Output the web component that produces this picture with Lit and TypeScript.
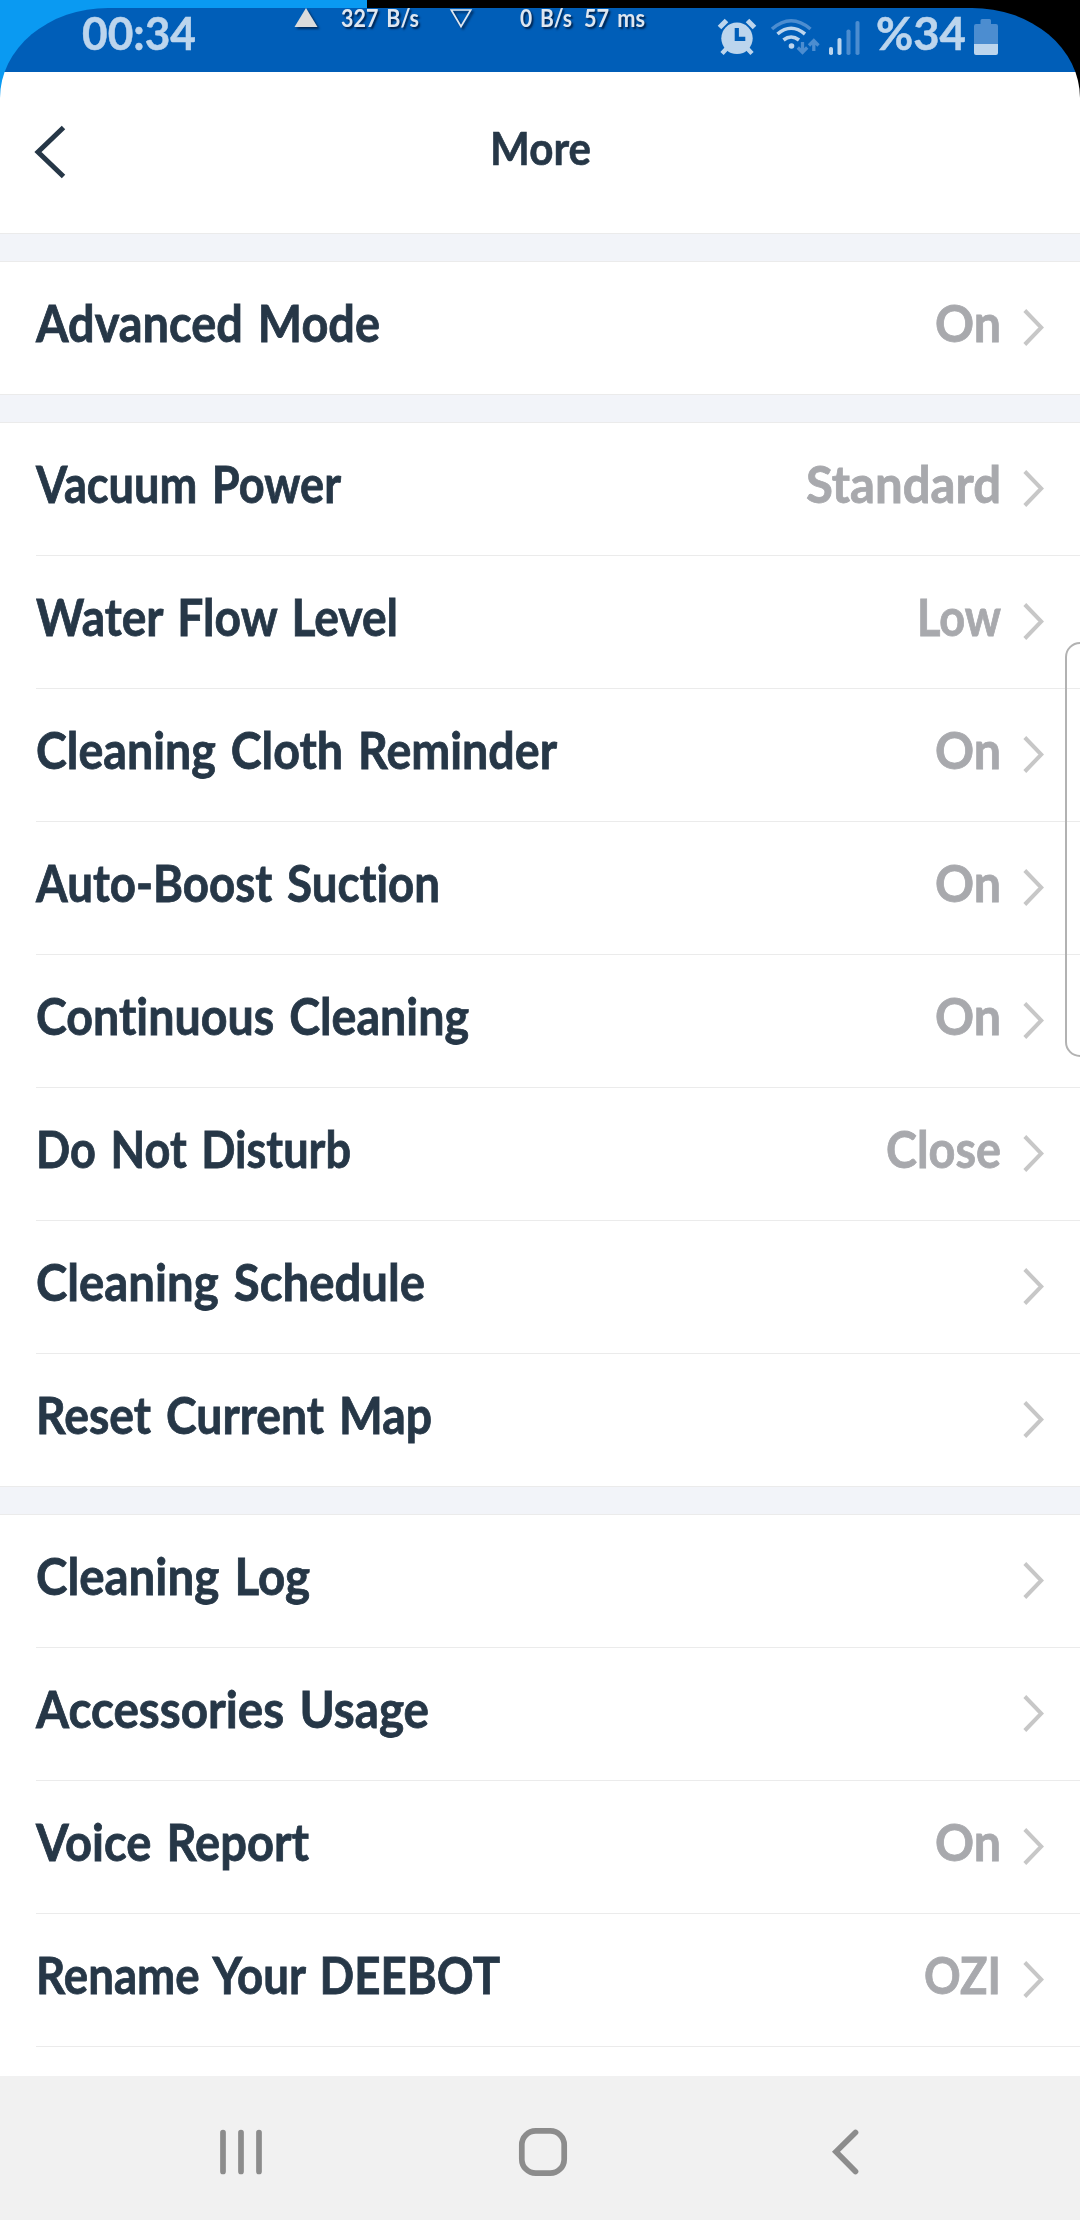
import { LitElement, html, css, nothing } from "lit";
import { customElement, property } from "lit/decorators.js";

interface Row {
  label: string;
  width: number;
  value?: string;
  valueWidth?: number;
}

const GROUPS: Row[][] = [
  [{ label: "Advanced Mode", width: 344, value: "On", valueWidth: 66 }],
  [
    { label: "Vacuum Power", width: 305, value: "Standard", valueWidth: 195 },
    { label: "Water Flow Level", width: 362, value: "Low", valueWidth: 84 },
    { label: "Cleaning Cloth Reminder", width: 521, value: "On", valueWidth: 66 },
    { label: "Auto-Boost Suction", width: 404, value: "On", valueWidth: 66 },
    { label: "Continuous Cleaning", width: 433, value: "On", valueWidth: 66 },
    { label: "Do Not Disturb", width: 315, value: "Close", valueWidth: 115 },
    { label: "Cleaning Schedule", width: 389 },
    { label: "Reset Current Map", width: 396 },
  ],
  [
    { label: "Cleaning Log", width: 274 },
    { label: "Accessories Usage", width: 393 },
    { label: "Voice Report", width: 273, value: "On", valueWidth: 66 },
    { label: "Rename Your DEEBOT", width: 464, value: "OZI", valueWidth: 77 },
  ],
];

/** One line of text, condensed or widened so that it fills a given width. */
@customElement("fit-text")
export class FitText extends LitElement {
  @property() text = "";
  @property({ type: Number }) width = 0;

  static styles = css`
    :host { display: block; flex: none; white-space: pre; font-variant-ligatures: none; }
    .run { display: inline-block; transform-origin: 0 50%; }
  `;

  render() {
    return html`<span class="run">${this.text}</span>`;
  }

  updated() {
    const run = this.renderRoot.querySelector<HTMLElement>(".run");
    if (!run || !this.width) return;
    run.style.transform = "none";
    run.style.marginRight = "0px";
    const natural = run.getBoundingClientRect().width;
    run.style.transform = `scaleX(${(this.width / natural).toFixed(4)})`;
    run.style.marginRight = `${(this.width - natural).toFixed(2)}px`;
    this.style.width = `${this.width}px`;
  }
}

@customElement("status-bar")
export class StatusBar extends LitElement {
  static styles = css`
    :host {
      display: flex; align-items: flex-start; height: 64px; color: #bcd5ed;
    }
    svg { display: block; flex: none; height: 64px; overflow: visible; }
    .big { font-size: 46px; line-height: 50px; font-weight: 700; -webkit-text-stroke: 0.5px currentColor; }
    .net {
      font-size: 24px; line-height: 20px; font-weight: 700; color: #dfe7f0;
      text-shadow: 2px 2px 2px rgba(0, 20, 50, 0.8); word-spacing: 3px;
    }
    .shade { filter: drop-shadow(2px 2px 1px rgba(0, 20, 50, 0.7)); }
    .time { margin-left: 82px; }
    .up { margin-left: 98px; }
    .rx { margin-left: 22px; }
    .down { margin-left: 30px; }
    .tx { margin-left: 46px; }
    .ping { margin-left: 12px; }
    .alarm { margin-left: 72px; }
    .wifi { margin-left: 13px; }
    .signal { margin-left: 8px; }
    .percent { margin-left: 14px; }
    .battery { margin-left: 7px; }
  `;

  render() {
    return html`
      <fit-text class="big time" text="00:34" width="114"></fit-text>
      <svg class="up shade" width="25" viewBox="294 8 25 64"><path d="M306 8L317.5 27H294.5Z" fill="#dcdcdc" /></svg>
      <fit-text class="net rx" text="327 B/s" width="78"></fit-text>
      <svg class="down shade" width="25" viewBox="449 8 25 64">
        <path d="M451.3 10H470.7L461 26.5Z" fill="none" stroke="#dfe7f0" stroke-width="1.7" />
      </svg>
      <fit-text class="net tx" text="0 B/s" width="52"></fit-text>
      <fit-text class="net ping" text="57 ms" width="61"></fit-text>
      <svg class="alarm" width="40" viewBox="717 8 40 64">
        <g stroke="#bcd5ed" stroke-width="5" fill="none">
          <path d="M719.5 27.5L726.5 20.5M754.5 27.5L747.5 20.5" />
          <path d="M722 53.5L729 46M752 53.5L745 46" stroke-width="4.5" />
        </g>
        <circle cx="737" cy="38.3" r="15.7" fill="#bcd5ed" />
        <path d="M736.8 28V38.8H745.3" fill="none" stroke="#005eb8" stroke-width="4.2" />
      </svg>
      <svg class="wifi" width="50" viewBox="770 8 50 64">
        <g fill="none" stroke-width="3.6">
          <path d="M772 29Q791 12.5 810.5 29" stroke="#4c8dd0" />
          <path d="M777.5 34Q791 22.5 805 34" stroke="#bcd5ed" />
          <path d="M783.5 40Q791 34 799 40" stroke="#bcd5ed" />
          <path d="M802.5 42V52M797.8 47.5L802.5 52.3L807.2 47.5M813.8 51V41M809 45.5L813.8 40.7L818.5 45.5" stroke="#4c8dd0" stroke-width="3.3" />
        </g>
        <circle cx="791.5" cy="46" r="2.8" fill="#bcd5ed" />
      </svg>
      <svg class="signal" width="34" viewBox="828 8 34 64">
        <g fill="#bcd5ed">
          <rect x="829" y="47" width="4" height="8" rx="1.8" />
          <rect x="837.5" y="38" width="4" height="17" rx="1.8" />
        </g>
        <g fill="#4c8dd0">
          <rect x="846.5" y="29.5" width="4" height="25.5" rx="1.8" />
          <rect x="855.5" y="21" width="4" height="34" rx="1.8" />
        </g>
      </svg>
      <fit-text class="big percent" text="%34" width="90"></fit-text>
      <svg class="battery" width="26" viewBox="973 8 26 64">
        <path d="M980.5 24V20.5Q980.5 19 982 19H989.5Q991 19 991 20.5V24H996Q998 24 998 26V44H974V26Q974 24 976 24Z" fill="#4c8dd0" />
        <path d="M974 44H998V53Q998 55 996 55H976Q974 55 974 53Z" fill="#bcd5ed" />
      </svg>
    `;
  }
}

@customElement("setting-row")
export class SettingRow extends LitElement {
  @property({ attribute: false }) row!: Row;

  static styles = css`
    :host {
      display: flex; align-items: flex-start; height: 132px;
      padding: 0 36px; font-size: 51px; line-height: 122px; font-weight: 700; color: #263747;
      word-spacing: 4px; -webkit-text-stroke: 0.8px currentColor;
    }
    .value { margin-left: auto; color: #a8a9ad; }
    .chevron { flex: none; display: block; width: 22px; height: 132px; margin-left: 21px; }
    .alone { margin-left: auto; }
  `;

  render() {
    const { label, width, value, valueWidth } = this.row;
    return html`
      <fit-text .text=${label} .width=${width}></fit-text>
      ${value
        ? html`<fit-text class="value" .text=${value} .width=${valueWidth ?? 0}></fit-text>`
        : nothing}
      <svg class="chevron ${value ? "" : "alone"}" viewBox="0 0 22 132">
        <path d="M2.8 48.5L19.3 65.5L2.8 82.5" fill="none" stroke="#c7c7c7" stroke-width="4" />
      </svg>
    `;
  }
}

@customElement("app-root")
export class AppRoot extends LitElement {
  static styles = css`
    :host {
      display: block; width: 1080px; height: 2220px; overflow: hidden; position: relative;
      font-family: Lato, "Open Sans", sans-serif;
      background: linear-gradient(to right, #0a9af2 367px, #000 367px);
    }
    .frame { box-sizing: border-box; height: 2220px; padding-top: 8px; }
    .screen {
      display: flex; flex-direction: column; height: 2212px;
      background: linear-gradient(#005eb8 64px, #fff 64px);
      border-radius: 108px 108px 0 0 / 90px 90px 0 0;
    }
    .header {
      flex: none; box-sizing: border-box; height: 162px; border-bottom: 1px solid #ebebeb;
      display: grid; grid-template-columns: 1fr auto 1fr; align-items: start;
      color: #263747; font-size: 46px; line-height: 152px; font-weight: 700;
      -webkit-text-stroke: 0.6px currentColor;
    }
    .back { display: block; margin-left: 34px; width: 34px; height: 161px; }
    .list {
      flex: 1; min-height: 0; overflow: hidden; display: flex; flex-direction: column;
      gap: 27px; padding-top: 27px; background: #f2f4f9;
    }
    .group { flex: none; background: #fff; border-top: 1px solid #ebebeb; border-bottom: 1px solid #ebebeb; }
    .divider { height: 1px; margin-left: 36px; background: #ebebeb; }
    .tail { height: 60px; }
    .nav { flex: none; height: 144px; background: #f1f1f1; }
    .nav svg { display: block; }
    .handle {
      position: absolute; left: 1065px; top: 642px; width: 30px; height: 415px;
      box-sizing: border-box; border: 2px solid #b2b2b2; border-radius: 20px;
    }
  `;

  render() {
    return html`
      <div class="frame">
        <div class="screen">
          <status-bar></status-bar>
          <div class="header">
            <svg class="back" viewBox="34 72 34 161">
              <path d="M63.5 127.5L38 152L63.5 176.5" fill="none" stroke="#263747" stroke-width="5" />
            </svg>
            <fit-text text="More" width="101"></fit-text>
          </div>
          <div class="list">
            ${GROUPS.map(
              (rows, g) => html`<div class="group">
                ${rows.map(
                  (row, i) => html`${i ? html`<div class="divider"></div>` : nothing}<setting-row .row=${row}></setting-row>`
                )}
                ${g === GROUPS.length - 1 ? html`<div class="divider"></div><div class="tail"></div>` : nothing}
              </div>`
            )}
          </div>
          <div class="nav">
            <svg width="1080" height="144" viewBox="0 2076 1080 144" fill="none" stroke="#8c8c8c" stroke-width="5.7" stroke-linecap="round">
              <path d="M223 2132.5V2171.5M241 2132.5V2171.5M259 2132.5V2171.5" />
              <rect x="521.8" y="2130.8" width="42.4" height="42.4" rx="14" />
              <path d="M855.5 2132.5L836 2151.7L855.5 2171.5" />
            </svg>
          </div>
        </div>
      </div>
      <div class="handle"></div>
    `;
  }
}
